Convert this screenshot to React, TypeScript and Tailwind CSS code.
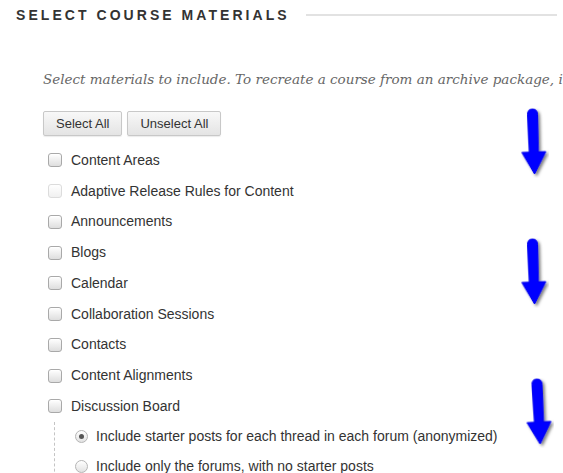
import React from 'react';

const materials = [
  { label: 'Content Areas' },
  { label: 'Adaptive Release Rules for Content', disabled: true },
  { label: 'Announcements' },
  { label: 'Blogs' },
  { label: 'Calendar' },
  { label: 'Collaboration Sessions' },
  { label: 'Contacts' },
  { label: 'Content Alignments' },
  { label: 'Discussion Board' },
];

const boardOptions = [
  { label: 'Include starter posts for each thread in each forum (anonymized)', checked: true },
  { label: 'Include only the forums, with no starter posts', checked: false },
];

function Checkbox({ disabled }: { disabled?: boolean }) {
  return (
    <span
      className={
        disabled
          ? 'inline-block h-[14px] w-[14px] shrink-0 rounded-[3px] border border-[#dcdcdc] bg-gradient-to-b from-white to-[#f0f0f0]'
          : 'inline-block h-[14px] w-[14px] shrink-0 rounded-[3px] border border-[#a9a9a9] bg-gradient-to-b from-white to-[#dedede] shadow-[inset_0_1px_0_#fff]'
      }
    />
  );
}

function Radio({ checked }: { checked?: boolean }) {
  return (
    <span className="flex h-[13px] w-[13px] shrink-0 items-center justify-center rounded-full border border-[#b5b5b5] bg-gradient-to-b from-white to-[#e2e2e2]">
      {checked && <span className="h-[5px] w-[5px] rounded-full bg-[#555]" />}
    </span>
  );
}

// hand-drawn style down arrow used as a callout
function DownArrow({ className, tilt = 0 }: { className: string; tilt?: number }) {
  return (
    <svg className={className} width="30" height="70" viewBox="0 0 30 70">
      <defs>
        <filter id="arrowShadow" x="-40%" y="-20%" width="180%" height="140%">
          <feDropShadow dx="2" dy="2" stdDeviation="1.5" floodColor="#000" floodOpacity="0.5" />
        </filter>
      </defs>
      <g filter="url(#arrowShadow)" transform={`rotate(${tilt} 15 35)`}>
        <path
          d="M9.5 6.5 Q9.5 1 14.5 1 Q19.5 1 19.5 6.5 L19 44 L26.5 44 L14.5 66 L2.5 44 L10 44 Z"
          fill="#0000ff"
          stroke="#0000ee"
          strokeWidth="1"
          strokeLinejoin="round"
        />
      </g>
    </svg>
  );
}

export default function App() {
  return (
    <div className="relative h-[473px] w-[563px] overflow-hidden bg-white font-['Liberation_Sans',Arial,sans-serif] text-[#333]">
      <div className="flex items-center gap-4 pl-4 pr-[6px] pt-[7px]">
        <h2 className="whitespace-nowrap text-[14px] font-bold uppercase leading-[16px] tracking-[3.05px] text-[#333]">
          Select Course Materials
        </h2>
        <div className="h-[2px] flex-1 bg-[#e2e2e2]" />
      </div>

      <div className="pl-[43px]">
        <p className="mt-[47px] whitespace-nowrap font-['DejaVu_Serif',Georgia,serif] text-[13.5px] italic leading-[18px] text-[#666]">
          Select materials to include. To recreate a course from an archive package, include all materials.
        </p>

        <div className="mt-[23px] flex gap-[5px]">
          <button className="h-[25px] rounded-[2px] border border-[#c8c8c8] bg-gradient-to-b from-[#f8f8f8] to-[#e4e4e4] px-[12px] text-[13px] text-[#333] shadow-[0_1px_1px_rgba(0,0,0,0.08)]">
            Select All
          </button>
          <button className="h-[25px] rounded-[2px] border border-[#c8c8c8] bg-gradient-to-b from-[#f8f8f8] to-[#e4e4e4] px-[12px] text-[13px] text-[#333] shadow-[0_1px_1px_rgba(0,0,0,0.08)]">
            Unselect All
          </button>
        </div>

        <ul className="mt-[9px] pl-[5px]">
          {materials.map((m) => (
            <li key={m.label} className="flex h-[30.75px] items-center gap-[9px] text-[14px]">
              <Checkbox disabled={m.disabled} />
              <span className="whitespace-nowrap">{m.label}</span>
            </li>
          ))}
        </ul>

        <div className="ml-[11px] border-l border-dashed border-[#c4c4c4] pl-[20px]">
          {boardOptions.map((o) => (
            <div key={o.label} className="flex h-[30px] items-center gap-[8px] text-[14px]">
              <Radio checked={o.checked} />
              <span className="whitespace-nowrap">{o.label}</span>
            </div>
          ))}
        </div>
      </div>

      <DownArrow className="absolute left-[519px] top-[108px]" tilt={-2} />
      <DownArrow className="absolute left-[519px] top-[238px]" tilt={-2} />
      <DownArrow className="absolute left-[524px] top-[378px]" tilt={-3} />
    </div>
  );
}
